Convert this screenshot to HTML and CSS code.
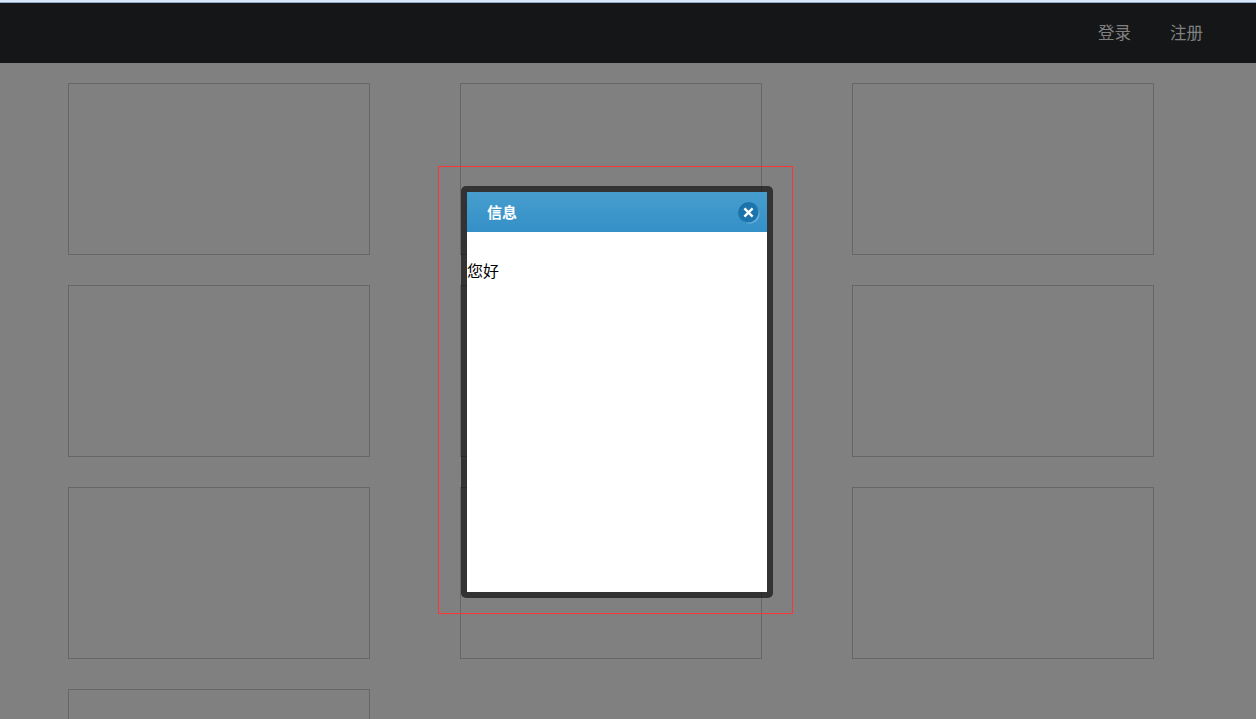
FILE: index.html
```html
<!DOCTYPE html>
<html lang="zh-CN">
<head>
<meta charset="utf-8">
<title>信息</title>
<link rel="stylesheet" href="styles.css">
</head>
<body>
<header class="topbar">
  <nav class="nav"><a class="nav-link">登录</a><a class="nav-link">注册</a></nav>
</header>
<main class="grid">
  <div class="card"></div><div class="card"></div><div class="card"></div>
  <div class="card"></div><div class="card"></div><div class="card"></div>
  <div class="card"></div><div class="card"></div><div class="card"></div>
  <div class="card"></div>
</main>
<div class="outline"></div>
<section class="dialog">
  <div class="dialog-head">
    <h2 class="dialog-title">信息</h2>
    <svg class="close" viewBox="0 0 22 22">
      <defs>
        <linearGradient id="rim" x1="0" y1="0" x2="1" y2="1">
          <stop offset=".2" stop-color="#12689f"/>
          <stop offset=".55" stop-color="#2b83b9"/>
          <stop offset=".85" stop-color="#74b8e0"/>
        </linearGradient>
      </defs>
      <circle cx="11" cy="11" r="10.7" fill="url(#rim)"/>
      <circle cx="10.7" cy="10.7" r="9.6" fill="#1b75ac"/>
      <path d="M6.4 6.4L14.6 14.6M14.6 6.4L6.4 14.6" stroke="#fff" stroke-width="2.4"/>
    </svg>
  </div>
  <div class="dialog-body">您好</div>
</section>
</body>
</html>
```
FILE: styles.css
```css
* {
  box-sizing: border-box;
}

body {
  margin: 0;
  height: 719px;
  overflow: hidden;
  position: relative;
  background: #808080;
  font-family: "Liberation Sans", "Noto Sans CJK SC", sans-serif;
}

.topbar {
  height: 63px;
  border-top: 2px solid #d9e8fb;
  background: #151618;
  box-shadow: inset 0 1px 0 #91a9cb;
}

.nav {
  display: flex;
  justify-content: flex-end;
  gap: 39px;
  height: 61px;
  padding: 2px 53px 0 0;
  line-height: 59px;
}

.nav-link {
  font-size: 16.5px;
  color: #808080;
}

.grid {
  display: grid;
  grid-template-columns: repeat(3, 302px);
  grid-auto-rows: 172px;
  gap: 30px 90px;
  height: 656px;
  overflow: hidden;
  padding: 20px 0 0 68px;
}

.card {
  border: 1px solid #666;
}

.outline {
  position: absolute;
  left: 438px;
  top: 166px;
  width: 355px;
  height: 448px;
  border: 1px solid #ff3535;
}

.dialog {
  position: absolute;
  left: 461px;
  top: 186px;
  width: 312px;
  height: 412px;
  border: 6px solid rgba(0, 0, 0, .6);
  border-radius: 5px;
  background: #fff;
  background-clip: padding-box;
}

.dialog-head {
  display: flex;
  align-items: flex-start;
  justify-content: space-between;
  height: 40px;
  padding: 0 7px 0 20px;
  background: linear-gradient(#479dce, #3490c7);
}

.dialog-title {
  margin: 0;
  font-size: 15px;
  line-height: 41px;
  font-weight: 700;
  color: #fff;
}

.close {
  width: 22px;
  height: 22px;
  margin-top: 10px;
}

.dialog-body {
  padding-top: 28px;
  font-size: 16px;
  line-height: 24px;
  color: #000;
}
```
